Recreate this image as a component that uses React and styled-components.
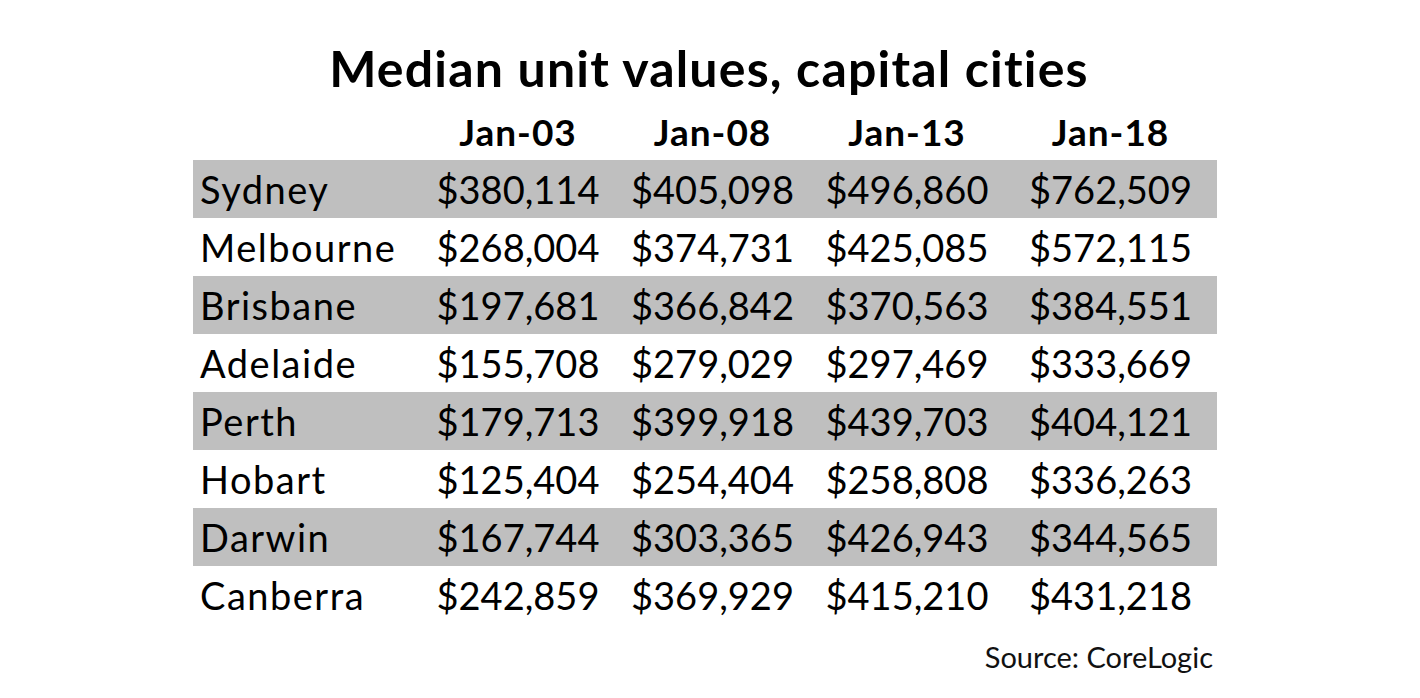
import React from "react";
import styled, { createGlobalStyle } from "styled-components";

const rows = [
  ["Sydney", "$380,114", "$405,098", "$496,860", "$762,509"],
  ["Melbourne", "$268,004", "$374,731", "$425,085", "$572,115"],
  ["Brisbane", "$197,681", "$366,842", "$370,563", "$384,551"],
  ["Adelaide", "$155,708", "$279,029", "$297,469", "$333,669"],
  ["Perth", "$179,713", "$399,918", "$439,703", "$404,121"],
  ["Hobart", "$125,404", "$254,404", "$258,808", "$336,263"],
  ["Darwin", "$167,744", "$303,365", "$426,943", "$344,565"],
  ["Canberra", "$242,859", "$369,929", "$415,210", "$431,218"],
];

const headers = ["Jan-03", "Jan-08", "Jan-13", "Jan-18"];

const Global = createGlobalStyle`
  html, body {
    margin: 0;
    background: #ffffff;
  }
  body {
    font-family: Lato, "Open Sans", sans-serif;
    color: #000;
  }
`;

const Page = styled.div`
  width: 1420px;
  height: 698px;
  padding-left: 193px;
  box-sizing: border-box;
  overflow: hidden;
`;

const Sheet = styled.div`
  width: 1024px;
`;

const Title = styled.h1`
  margin: 38px 0 0;
  height: 60px;
  line-height: 60px;
  font-size: 50px;
  letter-spacing: 1.2px;
  font-weight: 700;
  text-align: center;
  padding-left: 8px;
  white-space: nowrap;
`;

const Grid = styled.div`
  display: grid;
  grid-template-columns: 228px 194px 195px 194px 213px;
  margin-top: 6px;
`;

const Row = styled.div`
  display: contents;
`;

const Cell = styled.div`
  height: ${(p) => (p.$head ? 56 : 58)}px;
  line-height: ${(p) => (p.$head ? 56 : 58)}px;
  font-size: ${(p) => (p.$head ? 37 : 38)}px;
  font-weight: ${(p) => (p.$head ? 700 : 400)};
  letter-spacing: ${(p) => (p.$head ? "1px" : p.$left ? "1.5px" : "0")};
  text-align: ${(p) => (p.$left ? "left" : "center")};
  padding-left: ${(p) => (p.$left ? "7px" : "0")};
  background: ${(p) => (p.$shade ? "#bfbfbf" : "transparent")};
  white-space: nowrap;
`;

const Source = styled.div`
  margin-top: 18px;
  text-align: right;
  padding-right: 4px;
  font-size: 29px;
  line-height: 30px;
  color: #111;
`;

export default function App() {
  return (
    <Page>
      <Global />
      <Sheet>
        <Title>Median unit values, capital cities</Title>
        <Grid>
          <Row>
            <Cell $head $left />
            {headers.map((h) => (
              <Cell $head key={h}>
                {h}
              </Cell>
            ))}
          </Row>
          {rows.map((r, i) => (
            <Row key={r[0]}>
              {r.map((v, j) => (
                <Cell key={j} $left={j === 0} $shade={i % 2 === 0}>
                  {v}
                </Cell>
              ))}
            </Row>
          ))}
        </Grid>
        <Source>Source: CoreLogic</Source>
      </Sheet>
    </Page>
  );
}
